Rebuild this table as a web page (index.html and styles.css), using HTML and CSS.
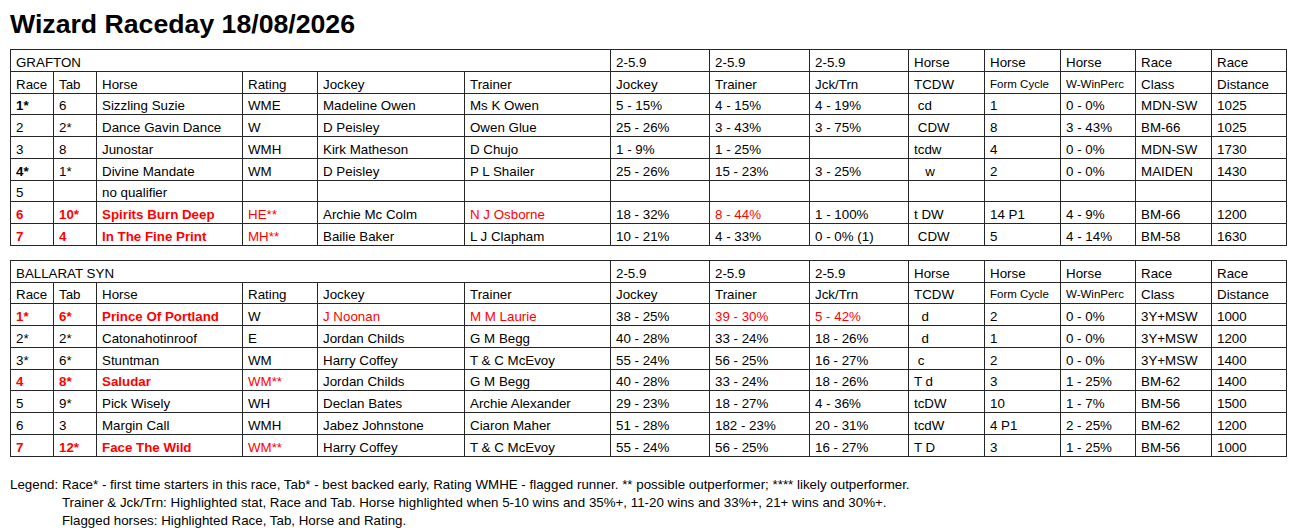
FILE: index.html
```html
<!DOCTYPE html>
<html>
<head>
<meta charset="utf-8">
<link rel="stylesheet" href="styles.css">
</head>
<body>
<h1 class="title">Wizard Raceday 18/08/2026</h1>

<table class="race-table">
  <colgroup>
    <col class="c43"><col class="c43"><col class="c146"><col class="c75"><col class="c147"><col class="c146">
    <col class="c99"><col class="c100"><col class="c99"><col class="c76"><col class="c76"><col class="c75"><col class="c76"><col class="c75">
  </colgroup>
  <tr>
    <td colspan="6">GRAFTON</td>
    <td>2-5.9</td><td>2-5.9</td><td>2-5.9</td>
    <td>Horse</td><td>Horse</td><td>Horse</td><td>Race</td><td>Race</td>
  </tr>
  <tr>
    <td>Race</td><td>Tab</td><td>Horse</td><td>Rating</td><td>Jockey</td><td>Trainer</td>
    <td>Jockey</td><td>Trainer</td><td>Jck/Trn</td><td>TCDW</td><td class="small">Form Cycle</td><td class="small">W-WinPerc</td><td>Class</td><td>Distance</td>
  </tr>
  <tr>
    <td class="b">1*</td><td>6</td><td>Sizzling Suzie</td><td>WME</td><td>Madeline Owen</td><td>Ms K Owen</td>
    <td>5 - 15%</td><td>4 - 15%</td><td>4 - 19%</td><td class="pre"> cd</td><td>1</td><td>0 - 0%</td><td>MDN-SW</td><td>1025</td>
  </tr>
  <tr>
    <td>2</td><td>2*</td><td>Dance Gavin Dance</td><td>W</td><td>D Peisley</td><td>Owen Glue</td>
    <td>25 - 26%</td><td>3 - 43%</td><td>3 - 75%</td><td class="pre"> CDW</td><td>8</td><td>3 - 43%</td><td>BM-66</td><td>1025</td>
  </tr>
  <tr>
    <td>3</td><td>8</td><td>Junostar</td><td>WMH</td><td>Kirk Matheson</td><td>D Chujo</td>
    <td>1 - 9%</td><td>1 - 25%</td><td></td><td>tcdw</td><td>4</td><td>0 - 0%</td><td>MDN-SW</td><td>1730</td>
  </tr>
  <tr>
    <td class="b">4*</td><td>1*</td><td>Divine Mandate</td><td>WM</td><td>D Peisley</td><td>P L Shailer</td>
    <td>25 - 26%</td><td>15 - 23%</td><td>3 - 25%</td><td class="pre">   w</td><td>2</td><td>0 - 0%</td><td>MAIDEN</td><td>1430</td>
  </tr>
  <tr>
    <td>5</td><td></td><td>no qualifier</td><td></td><td></td><td></td>
    <td></td><td></td><td></td><td></td><td></td><td></td><td></td><td></td>
  </tr>
  <tr>
    <td class="rb">6</td><td class="rb">10*</td><td class="rb">Spirits Burn Deep</td><td class="r">HE**</td><td>Archie Mc Colm</td><td class="r">N J Osborne</td>
    <td>18 - 32%</td><td class="r">8 - 44%</td><td>1 - 100%</td><td>t DW</td><td>14 P1</td><td>4 - 9%</td><td>BM-66</td><td>1200</td>
  </tr>
  <tr>
    <td class="rb">7</td><td class="rb">4</td><td class="rb">In The Fine Print</td><td class="r">MH**</td><td>Bailie Baker</td><td>L J Clapham</td>
    <td>10 - 21%</td><td>4 - 33%</td><td>0 - 0% (1)</td><td class="pre"> CDW</td><td>5</td><td>4 - 14%</td><td>BM-58</td><td>1630</td>
  </tr>
</table>

<table class="race-table">
  <colgroup>
    <col class="c43"><col class="c43"><col class="c146"><col class="c75"><col class="c147"><col class="c146">
    <col class="c99"><col class="c100"><col class="c99"><col class="c76"><col class="c76"><col class="c75"><col class="c76"><col class="c75">
  </colgroup>
  <tr>
    <td colspan="6">BALLARAT SYN</td>
    <td>2-5.9</td><td>2-5.9</td><td>2-5.9</td>
    <td>Horse</td><td>Horse</td><td>Horse</td><td>Race</td><td>Race</td>
  </tr>
  <tr>
    <td>Race</td><td>Tab</td><td>Horse</td><td>Rating</td><td>Jockey</td><td>Trainer</td>
    <td>Jockey</td><td>Trainer</td><td>Jck/Trn</td><td>TCDW</td><td class="small">Form Cycle</td><td class="small">W-WinPerc</td><td>Class</td><td>Distance</td>
  </tr>
  <tr>
    <td class="rb">1*</td><td class="rb">6*</td><td class="rb">Prince Of Portland</td><td>W</td><td class="r">J Noonan</td><td class="r">M M Laurie</td>
    <td>38 - 25%</td><td class="r">39 - 30%</td><td class="r">5 - 42%</td><td class="pre">  d</td><td>2</td><td>0 - 0%</td><td>3Y+MSW</td><td>1000</td>
  </tr>
  <tr>
    <td>2*</td><td>2*</td><td>Catonahotinroof</td><td>E</td><td>Jordan Childs</td><td>G M Begg</td>
    <td>40 - 28%</td><td>33 - 24%</td><td>18 - 26%</td><td class="pre">  d</td><td>1</td><td>0 - 0%</td><td>3Y+MSW</td><td>1200</td>
  </tr>
  <tr>
    <td>3*</td><td>6*</td><td>Stuntman</td><td>WM</td><td>Harry Coffey</td><td>T &amp; C McEvoy</td>
    <td>55 - 24%</td><td>56 - 25%</td><td>16 - 27%</td><td class="pre"> c</td><td>2</td><td>0 - 0%</td><td>3Y+MSW</td><td>1400</td>
  </tr>
  <tr>
    <td class="rb">4</td><td class="rb">8*</td><td class="rb">Saludar</td><td class="r">WM**</td><td>Jordan Childs</td><td>G M Begg</td>
    <td>40 - 28%</td><td>33 - 24%</td><td>18 - 26%</td><td>T d</td><td>3</td><td>1 - 25%</td><td>BM-62</td><td>1400</td>
  </tr>
  <tr>
    <td>5</td><td>9*</td><td>Pick Wisely</td><td>WH</td><td>Declan Bates</td><td>Archie Alexander</td>
    <td>29 - 23%</td><td>18 - 27%</td><td>4 - 36%</td><td>tcDW</td><td>10</td><td>1 - 7%</td><td>BM-56</td><td>1500</td>
  </tr>
  <tr>
    <td>6</td><td>3</td><td>Margin Call</td><td>WMH</td><td>Jabez Johnstone</td><td>Ciaron Maher</td>
    <td>51 - 28%</td><td>182 - 23%</td><td>20 - 31%</td><td>tcdW</td><td>4 P1</td><td>2 - 25%</td><td>BM-62</td><td>1200</td>
  </tr>
  <tr>
    <td class="rb">7</td><td class="rb">12*</td><td class="rb">Face The Wild</td><td class="r">WM**</td><td>Harry Coffey</td><td>T &amp; C McEvoy</td>
    <td>55 - 24%</td><td>56 - 25%</td><td>16 - 27%</td><td>T D</td><td>3</td><td>1 - 25%</td><td>BM-56</td><td>1000</td>
  </tr>
</table>

<div class="legend">
  <div class="legend-label">Legend: </div>
  <div class="legend-lines">
    <div>Race* - first time starters in this race, Tab* - best backed early, Rating WMHE - flagged runner. ** possible outperformer; **** likely outperformer.</div>
    <div>Trainer &amp; Jck/Trn: Highlighted stat, Race and Tab. Horse highlighted when 5-10 wins and 35%+, 11-20 wins and 33%+, 21+ wins and 30%+.</div>
    <div>Flagged horses: Highlighted Race, Tab, Horse and Rating.</div>
  </div>
</div>
</body>
</html>
```

FILE: styles.css
```css
html, body {
  margin: 0;
  padding: 0;
  background: #ffffff;
}

body {
  padding: 8px 10px 0 10px;
  font-family: "Liberation Sans", Arial, sans-serif;
  color: #000000;
}

.title {
  margin: 0 0 9px 0;
  font-size: 26.67px;
  line-height: 32px;
  font-weight: bold;
}

.race-table {
  width: 1276px;
  table-layout: fixed;
  border-collapse: collapse;
  font-size: 13.33px;
  margin-bottom: 14px;
}

.race-table td {
  border: 1px solid #262626;
  height: 21.75px;
  box-sizing: border-box;
  padding: 0 2px 1px 5px;
  vertical-align: bottom;
  white-space: nowrap;
  overflow: hidden;
  line-height: 15px;
}

.c43 { width: 43px; }
.c75 { width: 75px; }
.c76 { width: 76px; }
.c99 { width: 99px; }
.c100 { width: 100px; }
.c146 { width: 146px; }
.c147 { width: 147px; }

.race-table td.small {
  font-size: 11.5px;
}

.race-table td.pre {
  white-space: pre;
}

.b {
  font-weight: bold;
}

.r {
  color: #ff0000;
}

.rb {
  color: #ff0000;
  font-weight: bold;
}

.legend {
  display: flex;
  margin-top: 19px;
  font-size: 13.33px;
  line-height: 18px;
}

.legend-label {
  white-space: pre;
}
```
